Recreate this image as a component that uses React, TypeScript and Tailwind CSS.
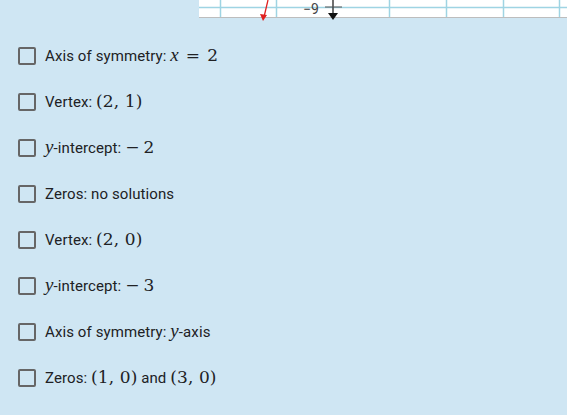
import React from 'react';

const M: React.FC<{ children: React.ReactNode }> = ({ children }) => (
    <span className="font-['DejaVu_Serif',serif] text-[17px] leading-none">{children}</span>
);

const V: React.FC<{ children: React.ReactNode }> = ({ children }) => (
    <span className="font-['Liberation_Serif',serif] text-[19px] italic leading-none">{children}</span>
);

const items: React.ReactNode[] = [
    <>Axis of symmetry: <V>x</V><M><span className="mx-[7px]">=</span>2</M></>,
    <>Vertex: <M>(2, 1)</M></>,
    <><V>y</V>-intercept: <M>−<span className="ml-[4px]">2</span></M></>,
    <>Zeros: no solutions</>,
    <>Vertex: <M>(2, 0)</M></>,
    <><V>y</V>-intercept: <M>−<span className="ml-[4px]">3</span></M></>,
    <>Axis of symmetry: <V>y</V>-axis</>,
    <>Zeros: <M>(1, 0)</M> and <M>(3, 0)</M></>,
];

const GraphStrip = () => (
    <div className="ml-[199px] h-[18px] bg-white border-b border-[#bdbdbd] relative">
        <svg width="368" height="22" className="absolute left-0 top-0 overflow-visible">
            <line x1="0" y1="7.5" x2="368" y2="7.5" stroke="#9fd4e3" strokeWidth="1.5" />
            {[21, 77, 190, 247, 304, 360].map(x => (
                <line key={x} x1={x + 0.5} y1="0" x2={x + 0.5} y2="17" stroke="#9fd4e3" strokeWidth="1.5" />
            ))}
            <line x1="134" y1="0" x2="134" y2="14" stroke="#222" strokeWidth="1.3" />
            <line x1="126" y1="7" x2="143" y2="7" stroke="#555" strokeWidth="1" />
            <polygon points="129,13 139,13 134,20" fill="#111" />
            <text x="104" y="14" fontSize="14" fill="#444" fontFamily="Roboto, sans-serif">−9</text>
            <line x1="69" y1="0" x2="65" y2="17" stroke="#e02020" strokeWidth="1.3" />
            <polygon points="61,14 68,15 64,21" fill="#e02020" />
        </svg>
    </div>
);

export default function App() {
    return (
        <div className="w-[567px] h-[415px] bg-[#cfe6f3] overflow-hidden font-['Roboto',sans-serif] text-[15px] tracking-[0.1px] text-[#202124]">
            <GraphStrip />
            <ul className="pt-[15px]">
                {items.map((item, i) => (
                    <li key={i} className="h-[46px] flex items-center pl-[18px]">
                        <span className="w-[18px] h-[18px] border-2 border-[#666] rounded-[2px] shrink-0" />
                        <span className="ml-[9px] whitespace-pre">{item}</span>
                    </li>
                ))}
            </ul>
        </div>
    );
}
